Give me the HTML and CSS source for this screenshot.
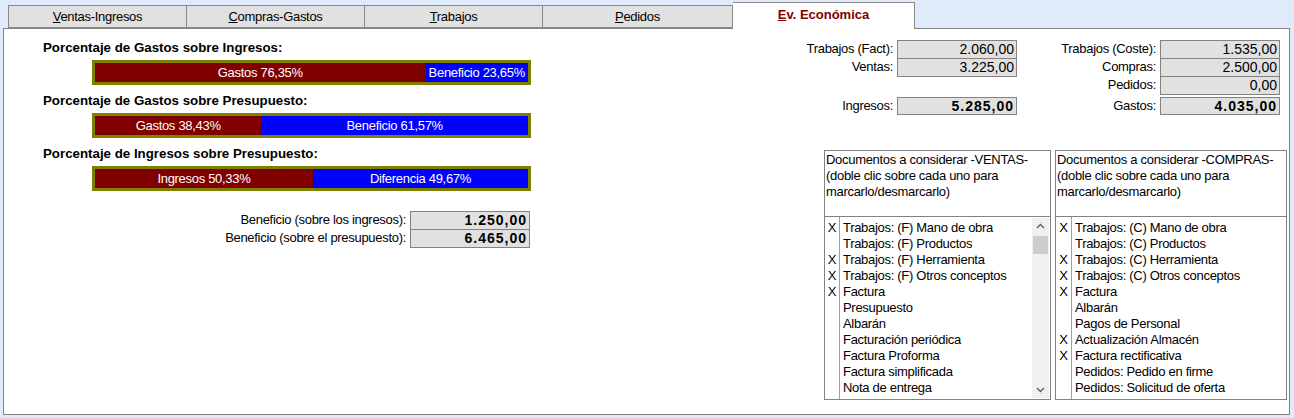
FILE: index.html
```html
<!DOCTYPE html>
<html lang="es">
<head>
  <meta charset="UTF-8">
  <title>Ev. Económica</title>
  <link rel="stylesheet" href="styles.css">
</head>
<body>
  <!-- Tab strip -->
  <div class="tabs">
    <div class="tab tab-1"><u>V</u>entas-Ingresos</div>
    <div class="tab tab-2"><u>C</u>ompras-Gastos</div>
    <div class="tab tab-3"><u>T</u>rabajos</div>
    <div class="tab tab-4"><u>P</u>edidos</div>
    <div class="tab active"><u>E</u>v. Económica</div>
  </div>

  <div class="panel">
    <!-- Percentage bars -->
    <div class="charts">
      <div class="chart">
        <div class="chart-title">Porcentaje de Gastos sobre Ingresos:</div>
        <div class="bar">
          <div class="seg red" style="width: 76.35%">Gastos 76,35%</div>
          <div class="seg blue" style="width: 23.65%">Beneficio 23,65%</div>
        </div>
      </div>
      <div class="chart">
        <div class="chart-title">Porcentaje de Gastos sobre Presupuesto:</div>
        <div class="bar">
          <div class="seg red" style="width: 38.43%">Gastos 38,43%</div>
          <div class="seg blue" style="width: 61.57%">Beneficio 61,57%</div>
        </div>
      </div>
      <div class="chart">
        <div class="chart-title">Porcentaje de Ingresos sobre Presupuesto:</div>
        <div class="bar">
          <div class="seg red" style="width: 50.33%">Ingresos 50,33%</div>
          <div class="seg blue" style="width: 49.67%">Diferencia 49,67%</div>
        </div>
      </div>

      <div class="profit">
        <span class="lbl">Beneficio (sobre los ingresos):</span>
        <span class="val bold">1.250,00</span>
        <span class="lbl">Beneficio (sobre el presupuesto):</span>
        <span class="val bold">6.465,00</span>
      </div>
    </div>

    <!-- Totals and document lists -->
    <div class="side">
      <div class="totals">
        <span class="lbl">Trabajos (Fact):</span>
        <span class="val">2.060,00</span>
        <span class="lbl">Trabajos (Coste):</span>
        <span class="val">1.535,00</span>

        <span class="lbl">Ventas:</span>
        <span class="val">3.225,00</span>
        <span class="lbl">Compras:</span>
        <span class="val">2.500,00</span>

        <span></span>
        <span></span>
        <span class="lbl">Pedidos:</span>
        <span class="val">0,00</span>

        <span class="lbl total">Ingresos:</span>
        <span class="val bold total">5.285,00</span>
        <span class="lbl total">Gastos:</span>
        <span class="val bold total">4.035,00</span>
      </div>

      <div class="lists">
        <div class="docbox ventas">
          <div class="doc-head">Documentos a considerar -VENTAS-<br>(doble clic sobre cada uno para marcarlo/desmarcarlo)</div>
          <div class="doc-body">
            <div class="doc-list">
              <div class="row"><span class="mark">X</span><span>Trabajos: (F) Mano de obra</span></div>
              <div class="row"><span class="mark"></span><span>Trabajos: (F) Productos</span></div>
              <div class="row"><span class="mark">X</span><span>Trabajos: (F) Herramienta</span></div>
              <div class="row"><span class="mark">X</span><span>Trabajos: (F) Otros conceptos</span></div>
              <div class="row"><span class="mark">X</span><span>Factura</span></div>
              <div class="row"><span class="mark"></span><span>Presupuesto</span></div>
              <div class="row"><span class="mark"></span><span>Albarán</span></div>
              <div class="row"><span class="mark"></span><span>Facturación periódica</span></div>
              <div class="row"><span class="mark"></span><span>Factura Proforma</span></div>
              <div class="row"><span class="mark"></span><span>Factura simplificada</span></div>
              <div class="row"><span class="mark"></span><span>Nota de entrega</span></div>
            </div>
            <div class="scrollbar">
              <svg class="arrow" width="17" height="17" viewBox="0 0 17 17"><path d="M5 10 L8.5 6.5 L12 10" fill="none" stroke="#606060" stroke-width="1.4"/></svg>
              <div class="thumb"></div>
              <div class="track"></div>
              <svg class="arrow" width="17" height="17" viewBox="0 0 17 17"><path d="M5 7 L8.5 10.5 L12 7" fill="none" stroke="#606060" stroke-width="1.4"/></svg>
            </div>
          </div>
        </div>

        <div class="docbox compras">
          <div class="doc-head">Documentos a considerar -COMPRAS-<br>(doble clic sobre cada uno para marcarlo/desmarcarlo)</div>
          <div class="doc-body">
            <div class="doc-list">
              <div class="row"><span class="mark">X</span><span>Trabajos: (C) Mano de obra</span></div>
              <div class="row"><span class="mark"></span><span>Trabajos: (C) Productos</span></div>
              <div class="row"><span class="mark">X</span><span>Trabajos: (C) Herramienta</span></div>
              <div class="row"><span class="mark">X</span><span>Trabajos: (C) Otros conceptos</span></div>
              <div class="row"><span class="mark">X</span><span>Factura</span></div>
              <div class="row"><span class="mark"></span><span>Albarán</span></div>
              <div class="row"><span class="mark"></span><span>Pagos de Personal</span></div>
              <div class="row"><span class="mark">X</span><span>Actualización Almacén</span></div>
              <div class="row"><span class="mark">X</span><span>Factura rectificativa</span></div>
              <div class="row"><span class="mark"></span><span>Pedidos: Pedido en firme</span></div>
              <div class="row"><span class="mark"></span><span>Pedidos: Solicitud de oferta</span></div>
            </div>
          </div>
        </div>
      </div>
    </div>
  </div>
</body>
</html>
```

FILE: styles.css
```css
body {
  margin: 0;
  width: 1294px;
  height: 418px;
  background-color: #dfebfa;
  font-family: "Liberation Sans", Arial, sans-serif;
  font-size: 13px;
  letter-spacing: -0.3px;
  color: #000;
  overflow: hidden;
}

/* tabs */
.tabs {
  display: flex;
  align-items: flex-end;
  height: 29px;
  padding-left: 8px;
  position: relative;
  z-index: 2;
}

.tab {
  box-sizing: border-box;
  height: 23px;
  line-height: 22px;
  text-align: center;
  background-color: #e1e1e1;
  border: 1px solid #8a8a8a;
  border-left: none;
  margin-bottom: 1px;
}

.tab-1 { width: 179px; border-left: 1px solid #8a8a8a; }
.tab-2 { width: 178px; }
.tab-3 { width: 178px; }
.tab-4 { width: 190px; }

.tab.active {
  width: 182px;
  height: 27px;
  margin-bottom: 0;
  line-height: 24px;
  background-color: #fff;
  border-bottom: none;
  color: #800000;
  font-weight: bold;
  letter-spacing: 0;
}

/* main panel */
.panel {
  box-sizing: border-box;
  display: flex;
  margin: -1px 4px 0 3px;
  height: 387px;
  background-color: #fff;
  border: 1px solid #828282;
}

.charts {
  padding: 11px 0 0 39px;
  width: 488px;
}

.chart + .chart {
  margin-top: 8px;
}

.chart-title {
  font-weight: bold;
  font-size: 13.3px;
  letter-spacing: 0;
  line-height: 16px;
}

.bar {
  display: flex;
  box-sizing: border-box;
  width: 439px;
  height: 25px;
  margin: 4px 0 0 49px;
  border: 3px solid #808000;
}

.seg {
  color: #fff;
  text-align: center;
  line-height: 19px;
  white-space: nowrap;
  overflow: hidden;
}

.red { background-color: #800000; }
.blue { background-color: #0000ff; }

.profit {
  display: grid;
  grid-template-columns: auto 120px;
  grid-auto-rows: 18px;
  justify-content: end;
  margin: 20px 1px 0 0;
}

/* shared label / value boxes */
.lbl {
  text-align: right;
  padding-right: 4px;
  line-height: 18px;
  white-space: nowrap;
}

.val {
  box-sizing: border-box;
  height: 19px;
  padding-right: 2px;
  text-align: right;
  line-height: 17px;
  font-size: 14px;
  letter-spacing: 0;
  background-color: #e1e1e1;
  border: 1px solid #828282;
}

.val.bold {
  font-weight: bold;
  letter-spacing: 1px;
}

/* right side */
.side {
  margin-left: auto;
  padding: 11px 2px 0 0;
  display: flex;
  flex-direction: column;
  align-items: flex-end;
}

.totals {
  display: grid;
  grid-template-columns: auto 120px 143px 120px;
  grid-template-rows: 18px 18px 18px 18px;
  margin-right: 7px;
}

.totals .total {
  margin-top: 3px;
}

.totals .val.total {
  height: 18px;
  line-height: 16px;
}

.lists {
  display: flex;
  gap: 4px;
  margin-top: 38px;
}

.docbox {
  box-sizing: border-box;
  height: 250px;
  border: 1px solid #828282;
  display: flex;
  flex-direction: column;
}

.ventas { width: 227px; }
.compras { width: 232px; }

.doc-head {
  height: 64px;
  padding: 1px 2px 0 1px;
  line-height: 16px;
  border-bottom: 1px solid #828282;
}

.doc-body {
  flex: 1;
  display: flex;
  min-height: 0;
}

.doc-list {
  flex: 1;
  padding-top: 3px;
  background: linear-gradient(#a0a0a0, #a0a0a0) 14px 0 / 1px 100% no-repeat;
}

.compras .doc-list {
  background-position: 15px 0;
}

.row {
  display: grid;
  grid-template-columns: 15px 1fr;
  height: 16px;
  line-height: 16px;
  white-space: nowrap;
}

.compras .row {
  grid-template-columns: 16px 1fr;
}

.mark {
  text-align: center;
  padding-right: 1px;
}

.row span + span {
  padding-left: 3px;
}

.scrollbar {
  width: 17px;
  margin: 1px 1px 1px 0;
  background-color: #f0f0f0;
  display: flex;
  flex-direction: column;
}

.scrollbar .arrow {
  display: block;
}

.thumb {
  height: 18px;
  margin: 1px 1px 0 1px;
  background-color: #cdcdcd;
}

.track {
  flex: 1;
}
```
